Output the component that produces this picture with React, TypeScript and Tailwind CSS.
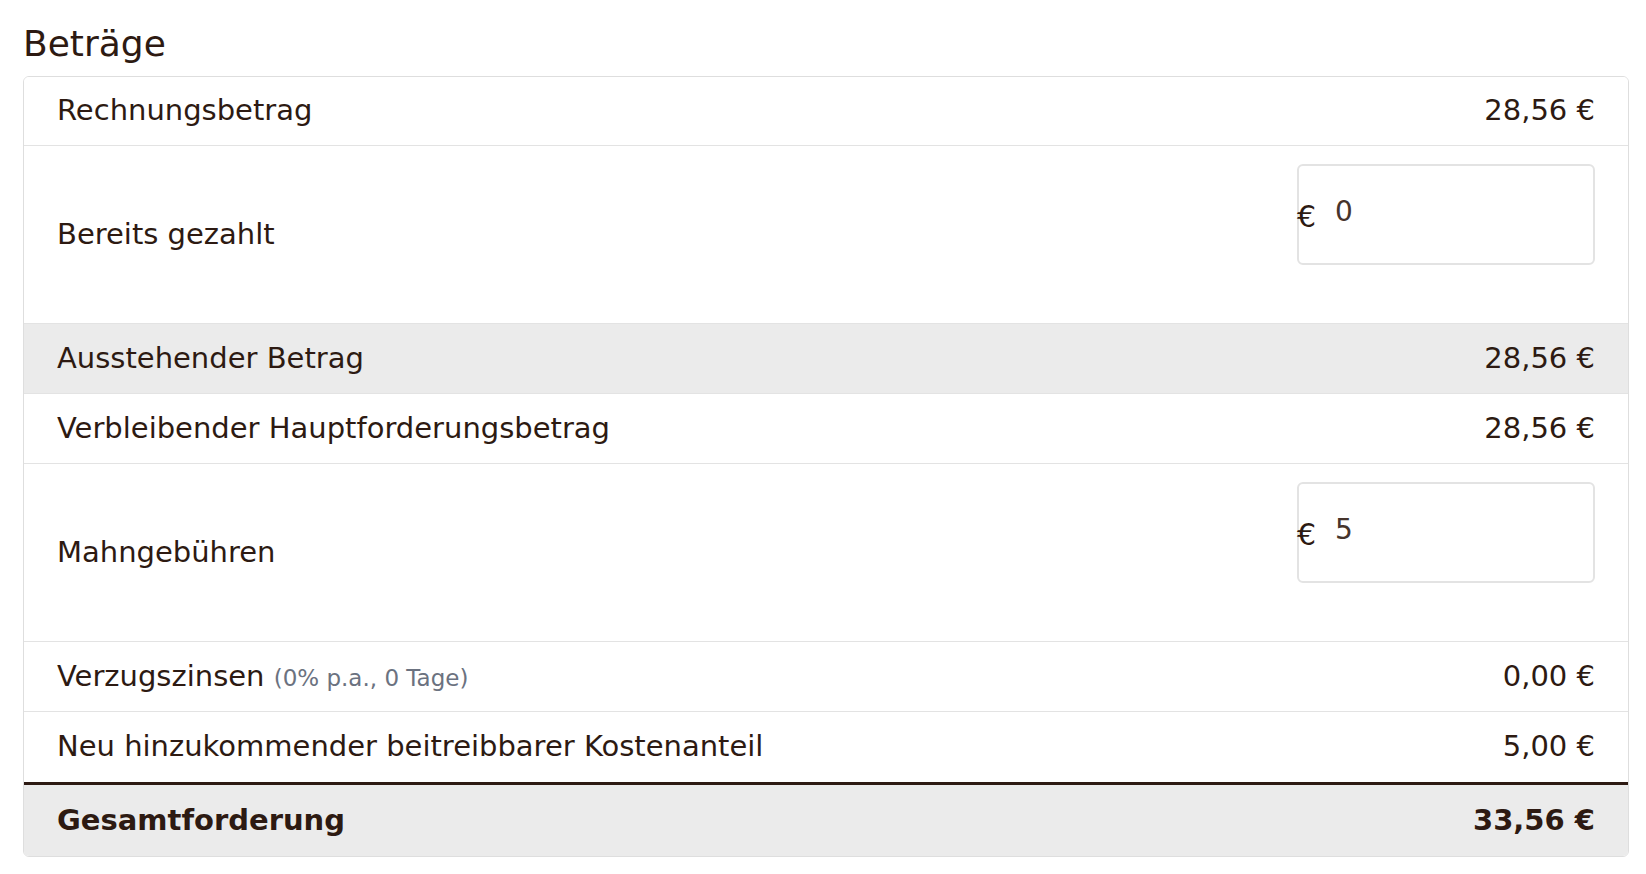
import React from 'react'

type Row =
  | { kind: 'value'; label: React.ReactNode; value: string; shaded?: boolean }
  | { kind: 'input'; label: string; value: string }

const rows: Row[] = [
  { kind: 'value', label: 'Rechnungsbetrag', value: '28,56 €' },
  { kind: 'input', label: 'Bereits gezahlt', value: '0' },
  { kind: 'value', label: 'Ausstehender Betrag', value: '28,56 €', shaded: true },
  { kind: 'value', label: 'Verbleibender Hauptforderungsbetrag', value: '28,56 €' },
  { kind: 'input', label: 'Mahngebühren', value: '5' },
  {
    kind: 'value',
    label: (
      <>
        Verzugszinsen <span className="text-[23px] text-[#6b7280]">(0% p.a., 0 Tage)</span>
      </>
    ),
    value: '0,00 €',
  },
]

function MoneyInput({ value }: { value: string }) {
  return (
    <div className="relative mt-[18px] w-[298px] self-start">
      <span className="pointer-events-none absolute left-0 top-[38px] text-[30px] leading-none text-[#2d1a12]">€</span>
      <input
        readOnly
        value={value}
        className="h-[101px] w-full rounded-[6px] border-2 border-[#e3e3e3] bg-white pl-[36px] pb-[6px] text-[28px] text-[#46342c] outline-none"
      />
    </div>
  )
}

export default function App() {
  return (
    <div
      className="min-h-screen bg-white pl-[23px] pr-[17px] pt-[23px] text-[#2d1a12]"
      style={{ fontFamily: '"DejaVu Sans", sans-serif' }}
    >
      <h2 className="text-[36px] leading-[42px]">Beträge</h2>
      <div className="mt-[11px] overflow-hidden rounded-[6px] border border-[#dedede]">
        {rows.map((row, i) =>
          row.kind === 'value' ? (
            <div
              key={i}
              className={`flex items-center justify-between border-b border-[#e3e3e3] px-[33px] text-[29px] ${
                i === 0 ? 'h-[69px]' : 'h-[70px]'
              } ${row.shaded ? 'bg-[#ebebeb]' : 'bg-white'}`}
            >
              <span>{row.label}</span>
              <span>{row.value}</span>
            </div>
          ) : (
            <div
              key={i}
              className="flex h-[178px] items-center justify-between border-b border-[#e3e3e3] px-[33px] text-[29px]"
            >
              <span>{row.label}</span>
              <MoneyInput value={row.value} />
            </div>
          )
        )}
        <div className="flex h-[73px] items-center justify-between border-b-[3px] border-[#2d1a12] px-[33px] text-[29px]">
          <span>Neu hinzukommender beitreibbarer Kostenanteil</span>
          <span>5,00 €</span>
        </div>
        <div className="flex h-[71px] items-center justify-between bg-[#ebebeb] px-[33px] text-[29px] font-bold">
          <span>Gesamtforderung</span>
          <span>33,56 €</span>
        </div>
      </div>
    </div>
  )
}
